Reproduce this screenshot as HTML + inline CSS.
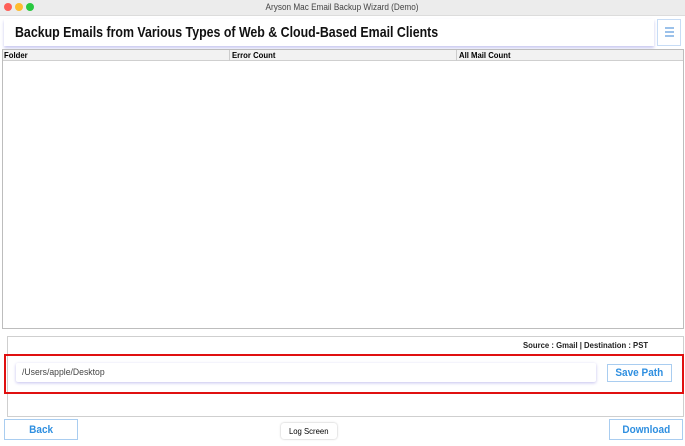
<!DOCTYPE html>
<html><head><style>
*{box-sizing:border-box;margin:0;padding:0}
body{width:685px;height:446px;background:#fff;font-family:"Liberation Sans",sans-serif;position:relative;overflow:hidden}
.a{position:absolute}
.n{display:inline-block;transform-origin:left center;transform:scaleX(.825);white-space:nowrap}
.m{display:inline-block;transform-origin:left center;transform:scaleX(.91);white-space:nowrap}
.btn{position:absolute;border:1.5px solid #a9cdf0;background:#fff;color:#2f8fe0;font-weight:bold;font-size:11px;display:flex;align-items:center;justify-content:center}
</style></head><body>
<div class="a" style="left:0;top:0;width:685px;height:16px;background:#ececec;border-bottom:1px solid #dcdcdc"></div>
<div class="a" style="left:4px;top:3px;width:8px;height:8px;border-radius:50%;background:#fe5f57"></div>
<div class="a" style="left:15px;top:3px;width:8px;height:8px;border-radius:50%;background:#febc2e"></div>
<div class="a" style="left:26px;top:3px;width:8px;height:8px;border-radius:50%;background:#28c840"></div>
<div class="a" style="left:0;width:685px;top:2px;text-align:center;font-size:9px;color:#444"><span class="m" style="transform-origin:center">Aryson Mac Email Backup Wizard (Demo)</span></div>
<div class="a" style="left:4px;top:19px;width:650px;height:27px;background:#fff;box-shadow:0 2px 3px #c8c8f0"></div>
<div class="a" style="left:15px;top:24px;font-size:15px;font-weight:bold;color:#111"><span class="n">Backup Emails from Various Types of Web &amp; Cloud-Based Email Clients</span></div>
<div class="a" style="left:657px;top:19px;width:24px;height:27px;border:1px solid #c7dcf5;background:#fff"></div>
<div class="a" style="left:665px;top:27px;width:9px;height:2px;background:#9bc1ea;box-shadow:0 4px 0 #9bc1ea,0 8px 0 #9bc1ea"></div>
<div class="a" style="left:2px;top:49px;width:682px;height:280px;border:1px solid #bdbdbd"></div>
<div class="a" style="left:3px;top:50px;width:680px;height:11px;background:#f2f2f2;border-bottom:1px solid #cfcfcf"></div>
<div class="a" style="left:229px;top:50px;width:1px;height:11px;background:#ccc"></div>
<div class="a" style="left:456px;top:50px;width:1px;height:11px;background:#ccc"></div>
<div class="a" style="left:4px;top:50px;font-size:8.5px;font-weight:bold"><span class="m">Folder</span></div>
<div class="a" style="left:232px;top:50px;font-size:8.5px;font-weight:bold"><span class="m">Error Count</span></div>
<div class="a" style="left:459px;top:50px;font-size:8.5px;font-weight:bold"><span class="m">All Mail Count</span></div>
<div class="a" style="left:7px;top:336px;width:677px;height:81px;border:1px solid #cfcfcf"></div>
<div class="a" style="left:523px;top:340px;font-size:8.5px;font-weight:bold;color:#222"><span class="m">Source : Gmail | Destination : PST</span></div>
<div class="a" style="left:4px;top:354px;width:680px;height:40px;border:2px solid #e01010"></div>
<div class="a" style="left:16px;top:363px;width:580px;height:19px;background:#fff;box-shadow:0 1px 3px #c4c0ee;border-radius:2px"></div>
<div class="a" style="left:22px;top:367px;font-size:9.5px;color:#444"><span class="m">/Users/apple/Desktop</span></div>
<div class="btn" style="left:607px;top:364px;width:65px;height:18px"><span class="m" style="transform-origin:center">Save Path</span></div>
<div class="btn" style="left:4px;top:419px;width:74px;height:21px"><span class="m" style="transform-origin:center">Back</span></div>
<div class="a" style="left:281px;top:423px;width:56px;height:16px;border-radius:3px;background:#fff;box-shadow:0 0 2px #bbb;font-size:8.5px;display:flex;align-items:center;justify-content:center"><span class="m" style="transform-origin:center">Log Screen</span></div>
<div class="btn" style="left:609px;top:419px;width:74px;height:21px"><span class="m" style="transform-origin:center">Download</span></div>
</body></html>
